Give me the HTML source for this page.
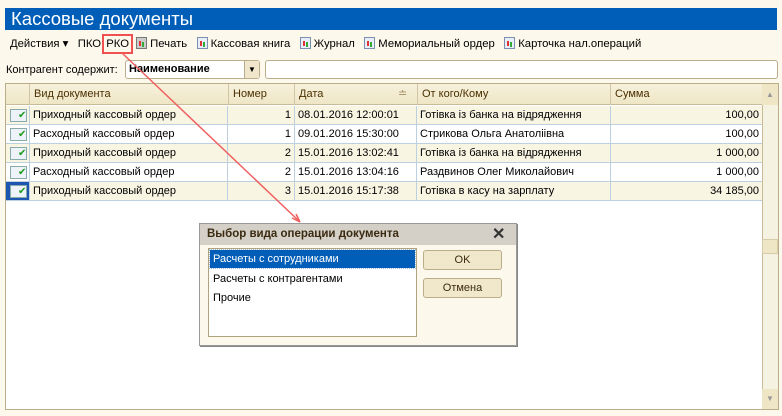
<!DOCTYPE html><html><head><meta charset="utf-8"><style>
*{margin:0;padding:0;box-sizing:border-box}
body{width:782px;height:416px;background:#FCF8EB;font-family:"Liberation Sans",sans-serif;font-size:11px;color:#000;position:relative;overflow:hidden}
.a{position:absolute;white-space:nowrap}
.ic{display:inline-block;width:11px;height:12px;border:1px solid #7c8fb0;background:#e8eef8;vertical-align:-2px;margin-right:3px;position:relative}
.ic:after{content:"";position:absolute;left:2px;bottom:2px;width:2px;height:5px;background:#d33;box-shadow:3px 1px 0 #3a3}
.row{position:absolute;left:6px;width:756px;height:19px;border-bottom:1px solid #bcd0e0}
.row div{position:absolute;top:0;height:18px;line-height:18px;border-right:1px solid #bcd0e0;padding:0 3px}
.di{position:absolute;left:4px;top:3px;width:17px;height:13px;border:1px solid #8aa;background:#eef3fa}
.di:after{content:"✔";position:absolute;left:7px;top:1px;color:#1a9a1a;font-size:10px;line-height:10px}
</style></head><body>
<div class="a" style="left:5px;top:8px;width:772px;height:22px;background:#005EB8;color:#fff;font-size:18.5px;line-height:22px;padding-left:6px">Кассовые документы</div>
<div class="a" style="top:37px;left:10px;line-height:14px;font-size:11.3px">Действия ▾&nbsp;&nbsp; ПКО <span style="border:2px solid #f05050;padding:2px 2px 2px 2px;margin-left:-2px">РКО</span> <span class="ic" style="border-color:#777;background:#ccc"></span>Печать&nbsp;&nbsp; <span class="ic"></span>Кассовая книга&nbsp;&nbsp; <span class="ic"></span>Журнал&nbsp;&nbsp; <span class="ic"></span>Мемориальный ордер&nbsp;&nbsp; <span class="ic"></span>Карточка нал.операций</div>
<div class="a" style="left:6px;top:64px">Контрагент содержит:</div>
<div class="a" style="left:125px;top:60px;width:135px;height:19px;background:#fff;border:1px solid #b9ad8a;border-radius:3px;font-weight:bold;line-height:17px;padding-left:3px">Наименование</div>
<div class="a" style="left:244px;top:61px;width:15px;height:17px;background:#efe6cc;border-left:1px solid #b9ad8a;font-size:8px;text-align:center;line-height:17px">▼</div>
<div class="a" style="left:265px;top:60px;width:513px;height:19px;background:#fff;border:1px solid #b9ad8a;border-radius:3px"></div>
<div class="a" style="left:5px;top:83px;width:774px;height:327px;background:#fff;border:1px solid #b9ad8a"></div>
<div class="a" style="left:6px;top:84px;width:756px;height:21px;background:linear-gradient(#f7f1dc,#efe6c6);border-bottom:1px solid #c8bc98;color:#4a3000;line-height:21px">
<span class="a" style="left:0;width:24px;height:21px;border-right:1px solid #d0c6a6"></span>
<span class="a" style="left:28px">Вид документа</span><span class="a" style="left:222px;height:21px;border-left:1px solid #d0c6a6;padding-left:4px">Номер</span>
<span class="a" style="left:288px;height:21px;border-left:1px solid #d0c6a6;padding-left:4px">Дата</span><span class="a" style="left:392px;color:#a89870">≐</span>
<span class="a" style="left:411px;height:21px;border-left:1px solid #d0c6a6;padding-left:4px">От кого/Кому</span>
<span class="a" style="left:604px;height:21px;border-left:1px solid #d0c6a6;padding-left:4px">Сумма</span></div>
<div class="a" style="left:762px;top:84px;width:16px;height:325px;background:#f6f2e2;border-left:1px solid #c8bc98"></div>
<div class="a" style="left:762px;top:84px;width:16px;height:21px;background:#efe6c6;color:#999;font-size:8px;text-align:center;line-height:21px">▲</div>
<div class="a" style="left:762px;top:239px;width:16px;height:15px;background:#efe6c6;border:1px solid #d8cca8"></div>
<div class="a" style="left:762px;top:389px;width:16px;height:20px;background:#efe6c6;color:#999;font-size:8px;text-align:center;line-height:20px">▼</div>
<div class="row" style="top:106px;background:#F8F5E3"><div style="left:0;width:24px"><span class="di"></span></div><div style="left:24px;width:198px">Приходный кассовый ордер</div><div style="left:222px;width:67px;text-align:right">1</div><div style="left:289px;width:122px">08.01.2016 12:00:01</div><div style="left:411px;width:194px">Готівка із банка на відрядження</div><div style="left:605px;width:151px;text-align:right;border:0">100,00</div></div>
<div class="row" style="top:125px;background:#fff"><div style="left:0;width:24px"><span class="di"></span></div><div style="left:24px;width:198px">Расходный кассовый ордер</div><div style="left:222px;width:67px;text-align:right">1</div><div style="left:289px;width:122px">09.01.2016 15:30:00</div><div style="left:411px;width:194px">Стрикова Ольга Анатоліівна</div><div style="left:605px;width:151px;text-align:right;border:0">100,00</div></div>
<div class="row" style="top:144px;background:#F8F5E3"><div style="left:0;width:24px"><span class="di"></span></div><div style="left:24px;width:198px">Приходный кассовый ордер</div><div style="left:222px;width:67px;text-align:right">2</div><div style="left:289px;width:122px">15.01.2016 13:02:41</div><div style="left:411px;width:194px">Готівка із банка на відрядження</div><div style="left:605px;width:151px;text-align:right;border:0">1 000,00</div></div>
<div class="row" style="top:163px;background:#fff"><div style="left:0;width:24px"><span class="di"></span></div><div style="left:24px;width:198px">Расходный кассовый ордер</div><div style="left:222px;width:67px;text-align:right">2</div><div style="left:289px;width:122px">15.01.2016 13:04:16</div><div style="left:411px;width:194px">Раздвинов Олег Миколайович</div><div style="left:605px;width:151px;text-align:right;border:0">1 000,00</div></div>
<div class="row" style="top:182px;background:#F8F5E3"><div style="left:0;width:24px;background:#1c56b0"><span class="di"></span></div><div style="left:24px;width:198px">Приходный кассовый ордер</div><div style="left:222px;width:67px;text-align:right">3</div><div style="left:289px;width:122px">15.01.2016 15:17:38</div><div style="left:411px;width:194px">Готівка в касу на зарплату</div><div style="left:605px;width:151px;text-align:right;border:0">34 185,00</div></div>
<svg class="a" style="left:0;top:0" width="782" height="416"><path d="M122 53 L300 222" stroke="#f06060" stroke-width="1.5" fill="none"/><path d="M300 222 L292 218 M300 222 L296 214" stroke="#f06060" stroke-width="1.5"/></svg>
<div class="a" style="left:199px;top:223px;width:318px;height:123px;background:#FCF8EB;border:1px solid #999;box-shadow:1px 1px 0 #888"></div>
<div class="a" style="left:200px;top:224px;width:316px;height:21px;background:#d4d0c8;font-weight:bold;color:#3a2a10;font-size:11.5px;line-height:21px;padding-left:7px">Выбор вида операции документа</div>
<div class="a" style="left:492px;top:224px;font-size:16px;font-weight:bold;line-height:21px;color:#333">✕</div>
<div class="a" style="left:208px;top:248px;width:209px;height:89px;background:#fff;border:1px solid #b0a480"></div>
<div class="a" style="left:210px;top:250px;width:205px;height:18px;background:#005EB8;color:#fff;line-height:18px;padding-left:3px;outline:1px dotted #9bd">Расчеты с сотрудниками</div>
<div class="a" style="left:213px;top:273px">Расчеты с контрагентами</div>
<div class="a" style="left:213px;top:292px">Прочие</div>
<div class="a" style="left:423px;top:250px;width:79px;height:20px;background:#f1e8cc;border:1px solid #b9ad8a;border-radius:3px;text-align:center;line-height:18px;color:#3a2a10">OK</div>
<div class="a" style="left:423px;top:278px;width:79px;height:20px;background:#f1e8cc;border:1px solid #b9ad8a;border-radius:3px;text-align:center;line-height:18px;color:#3a2a10">Отмена</div>
</body></html>
